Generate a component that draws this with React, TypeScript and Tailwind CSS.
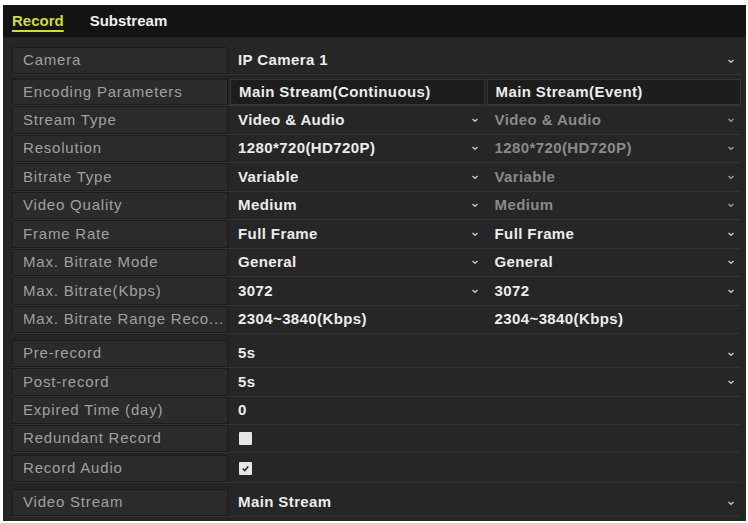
import React from "react";

const font = { fontFamily: '"Liberation Sans", Arial, sans-serif' };

function Chevron({ dim }: { dim?: boolean }) {
  return (
    <svg width="8" height="6" viewBox="0 0 8 6" className="shrink-0">
      <path d="M1.5 2 L4 4.2 L6.5 2" fill="none" stroke={dim ? "#9a9a9a" : "#c4c4c4"} strokeWidth="1.5" />
    </svg>
  );
}

function Label({ text }: { text: string }) {
  return (
    <div className="w-[216px] shrink-0 h-full flex items-center pl-[10px] bg-[#2b2b2b] border border-[#1c1c1c] text-[15px] tracking-[0.8px] text-[#a0a0a0] whitespace-nowrap overflow-hidden">
      {text}
    </div>
  );
}

function Cell({ text, drop, dim, boxed, children }: { text?: string; drop?: boolean; dim?: boolean; boxed?: boolean; children?: React.ReactNode }) {
  return (
    <div
      className={
        "flex-1 h-full flex items-center pl-[8px] pr-[6px] text-[15px] tracking-[0.4px] font-bold whitespace-nowrap " +
        (boxed ? "bg-[#1d1d1d] border border-[#353535] " : "bg-[#262626] ") +
        (dim ? "text-[#8a8a8a]" : "text-[#ececec]")
      }
    >
      <div className="flex-1">{children ?? text}</div>
      {drop && <Chevron dim={dim} />}
    </div>
  );
}

function Row({ label, h = "h-[28.5px]", children }: { label: string; h?: string; children: React.ReactNode }) {
  return (
    <div className={"flex items-stretch gap-[2px] border-b border-[#333333] " + h}>
      <Label text={label} />
      <div className="flex-1 flex gap-[2px]">{children}</div>
    </div>
  );
}

function Check({ checked }: { checked?: boolean }) {
  return (
    <div className="w-[13px] h-[13px] bg-[#e6e6e6] rounded-[1px] flex items-center justify-center ml-[1px]">
      {checked && (
        <svg width="9" height="9" viewBox="0 0 10 10">
          <path d="M2 5.2 L4.2 7.4 L8 2.8" fill="none" stroke="#2a2a2a" strokeWidth="1.8" />
        </svg>
      )}
    </div>
  );
}

export default function App() {
  return (
    <div className="w-[748px] h-[523px] bg-white pt-[5px] pl-[3px] pr-[2px] pb-[2px]" style={font}>
      <div className="h-full flex flex-col bg-[#252525]">
        <div className="h-[32px] shrink-0 bg-[#131313] flex items-center gap-[26px] pl-[9px]">
          <span className="text-[15px] font-bold text-[#cfdc3c] underline underline-offset-[4px] decoration-[2px]">Record</span>
          <span className="text-[15px] font-bold text-[#f0f0f0]">Substream</span>
        </div>
        <div className="flex-1 flex flex-col pl-[9px] pr-[5px] pt-[10px]">
          <Row label="Camera" h="h-[28px]">
            <Cell text="IP Camera 1" drop />
          </Row>
          <div className="h-[4px]" />
          <Row label="Encoding Parameters" h="h-[27px]">
            <Cell text="Main Stream(Continuous)" boxed />
            <Cell text="Main Stream(Event)" boxed />
          </Row>
          <Row label="Stream Type">
            <Cell text="Video & Audio" drop />
            <Cell text="Video & Audio" drop dim />
          </Row>
          <Row label="Resolution">
            <Cell text="1280*720(HD720P)" drop />
            <Cell text="1280*720(HD720P)" drop dim />
          </Row>
          <Row label="Bitrate Type">
            <Cell text="Variable" drop />
            <Cell text="Variable" drop dim />
          </Row>
          <Row label="Video Quality">
            <Cell text="Medium" drop />
            <Cell text="Medium" drop dim />
          </Row>
          <Row label="Frame Rate">
            <Cell text="Full Frame" drop />
            <Cell text="Full Frame" drop />
          </Row>
          <Row label="Max. Bitrate Mode">
            <Cell text="General" drop />
            <Cell text="General" drop />
          </Row>
          <Row label="Max. Bitrate(Kbps)">
            <Cell text="3072" drop />
            <Cell text="3072" drop />
          </Row>
          <Row label="Max. Bitrate Range Reco...">
            <Cell text="2304~3840(Kbps)" />
            <Cell text="2304~3840(Kbps)" />
          </Row>
          <div className="h-[6px]" />
          <Row label="Pre-record" h="h-[28.3px]">
            <Cell text="5s" drop />
          </Row>
          <Row label="Post-record" h="h-[28.3px]">
            <Cell text="5s" drop />
          </Row>
          <Row label="Expired Time (day)" h="h-[28.3px]">
            <Cell text="0" />
          </Row>
          <Row label="Redundant Record" h="h-[28.3px]">
            <Cell>
              <Check />
            </Cell>
          </Row>
          <div className="h-[2px]" />
          <Row label="Record Audio" h="h-[28px]">
            <Cell>
              <Check checked />
            </Cell>
          </Row>
          <div className="h-[6px]" />
          <Row label="Video Stream" h="h-[28px]">
            <Cell text="Main Stream" drop />
          </Row>
        </div>
      </div>
    </div>
  );
}
